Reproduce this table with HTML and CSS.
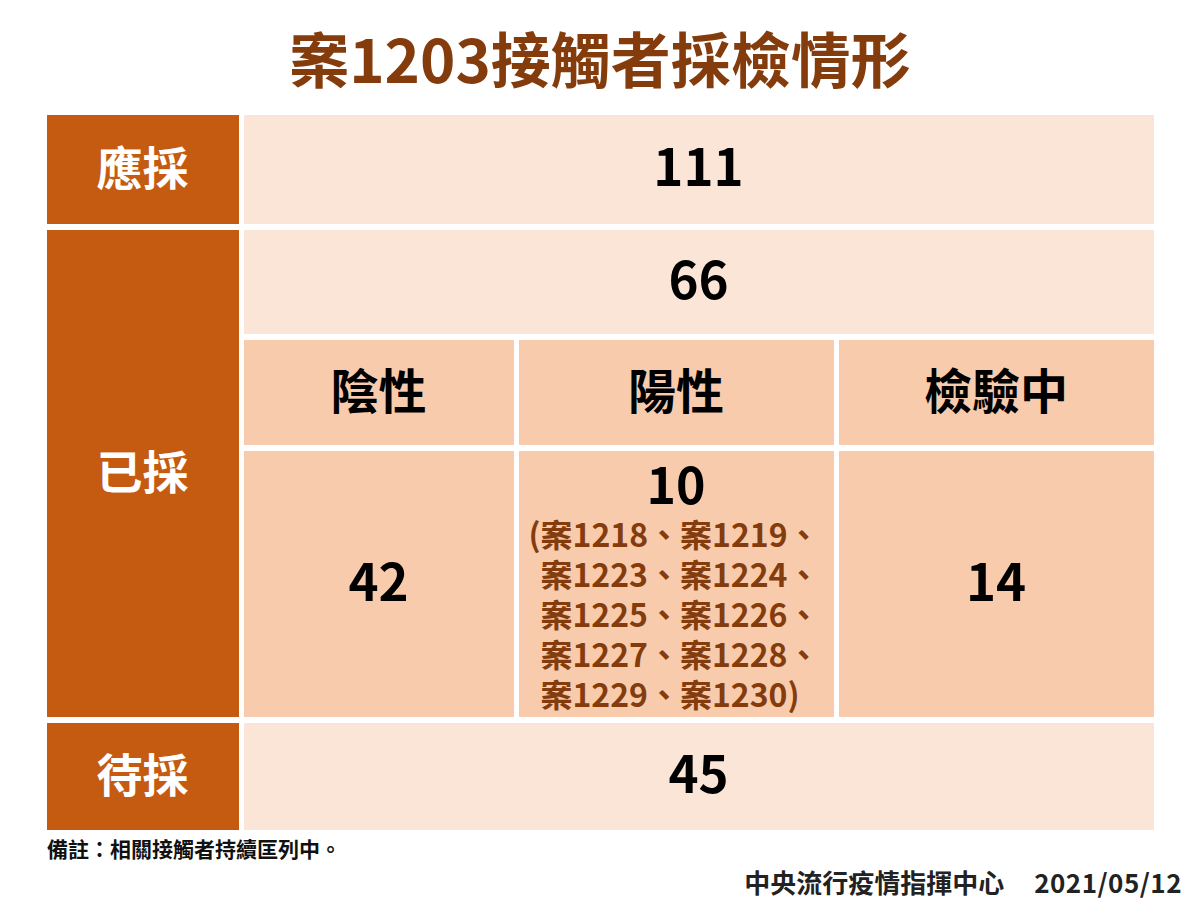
FILE: index.html
```html
<!DOCTYPE html>
<html lang="zh-Hant">
<head>
<meta charset="utf-8">
<title>案1203接觸者採檢情形</title>
<link rel="stylesheet" href="styles.css">
</head>
<body>
<h1 class="title">案1203接觸者採檢情形</h1>
<div class="table">
  <div class="cell head r1">應採</div>
  <div class="cell light span3 r1 num">111</div>

  <div class="cell head r-done">已採</div>
  <div class="cell light span3 r2 num">66</div>
  <div class="cell mid r3 c2 sub">陰性</div>
  <div class="cell mid r3 c3 sub">陽性</div>
  <div class="cell mid r3 c4 sub">檢驗中</div>
  <div class="cell mid r4 c2 num">42</div>
  <div class="cell mid r4 c3 pos">
    <div class="num-sm">10</div>
    <div class="cases">
      <span class="line first">(案1218、案1219、</span>
      <span class="line">案1223、案1224、</span>
      <span class="line">案1225、案1226、</span>
      <span class="line">案1227、案1228、</span>
      <span class="line">案1229、案1230)</span>
    </div>
  </div>
  <div class="cell mid r4 c4 num">14</div>

  <div class="cell head r5">待採</div>
  <div class="cell light span3 r5 num">45</div>
</div>
<p class="note">備註：相關接觸者持續匡列中。</p>
<p class="footer">中央流行疫情指揮中心<span class="date">2021/05/12</span></p>
</body>
</html>
```

FILE: styles.css
```css
html, body {
  margin: 0;
  padding: 0;
  background: #ffffff;
}

body {
  width: 1200px;
  height: 900px;
  font-family: "Noto Sans CJK TC", "Noto Sans", sans-serif;
  overflow: hidden;
}

.title {
  margin: 0;
  padding-top: 27px;
  height: 60px;
  line-height: 60px;
  font-size: 60px;
  font-weight: 700;
  color: #843c0c;
  text-align: center;
}

.table {
  width: 1107px;
  margin: 28px auto 0;
  display: grid;
  grid-template-columns: 192px 270px 315px 315px;
  grid-template-rows: 109px 104px 105px 266px 107px;
  column-gap: 5px;
  row-gap: 6px;
}

.cell {
  display: flex;
  align-items: center;
  justify-content: center;
  text-align: center;
  line-height: 1;
  padding-bottom: 10px;
  box-sizing: border-box;
}

.head {
  grid-column: 1;
  background: #c55a11;
  color: #ffffff;
  font-size: 46px;
  font-weight: 700;
}

.light {
  background: #fbe5d6;
}

.mid {
  background: #f8cbad;
}

.span3 {
  grid-column: 2 / 5;
}

.r1 { grid-row: 1; }
.r2 { grid-row: 2; }
.r3 { grid-row: 3; }
.r4 { grid-row: 4; }
.r5 { grid-row: 5; }
.r-done { grid-row: 2 / 5; }
.c2 { grid-column: 2; }
.c3 { grid-column: 3; }
.c4 { grid-column: 4; }

.num {
  font-size: 51px;
  font-weight: 700;
  color: #000000;
}

.sub {
  font-size: 48px;
  font-weight: 700;
  color: #000000;
}

.pos {
  flex-direction: column;
  justify-content: flex-start;
  padding-top: 4px;
  padding-bottom: 0;
}

.num-sm {
  font-size: 50px;
  line-height: 54px;
  font-weight: 700;
  color: #000000;
}

.cases {
  display: flex;
  flex-direction: column;
  align-items: flex-start;
  margin-top: 4px;
  margin-left: 8px;
  font-size: 32px;
  font-weight: 700;
  line-height: 40px;
  color: #843c0c;
}

.line {
  display: block;
  white-space: nowrap;
}

.line.first {
  margin-left: -12px;
}

.note {
  margin: 6px 0 0 47px;
  font-size: 21px;
  line-height: 24px;
  font-weight: 700;
  color: #111111;
}

.footer {
  margin: 7px 18px 0 0;
  text-align: right;
  font-size: 26px;
  line-height: 30px;
  font-weight: 700;
  color: #222222;
}

.date {
  margin-left: 30px;
  letter-spacing: 0.5px;
}
```
